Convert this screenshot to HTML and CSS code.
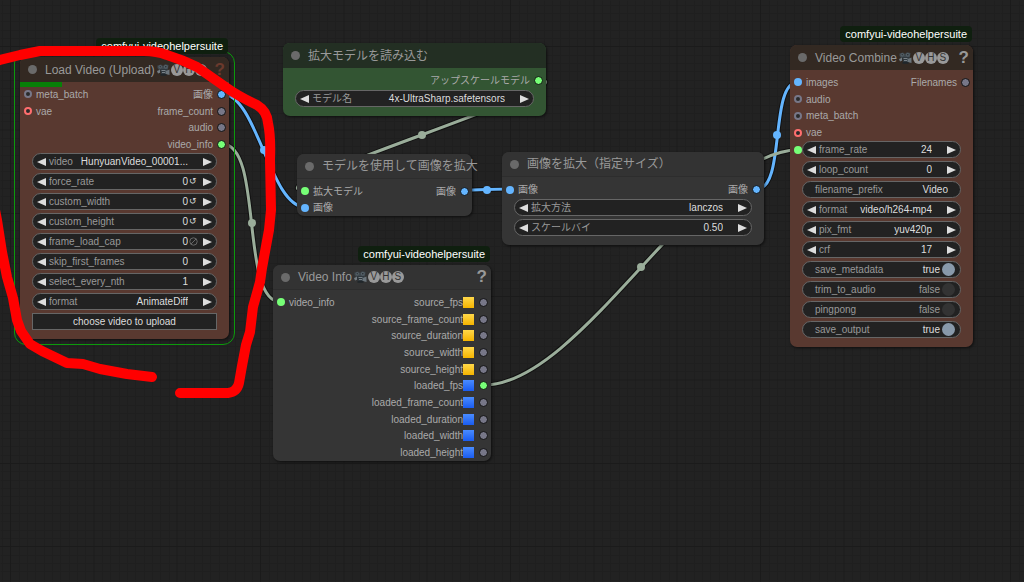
FILE: index.html
```html
<!DOCTYPE html>
<html lang="ja">
<head>
<meta charset="utf-8">
<title>ComfyUI</title>
<link rel="stylesheet" href="styles.css">
</head>
<body>
<svg class="defs" aria-hidden="true">
  <symbol id="left" viewBox="0 0 9 8"><path d="M9 0V8L0 4Z"/></symbol>
  <symbol id="right" viewBox="0 0 9 8"><path d="M0 0V8L9 4Z"/></symbol>
  <symbol id="camera" viewBox="0 0 13 12">
    <path d="M.5 1.500L4 .5L6 2L8 .3L11.500 1L11 5L10 6H2L.5 4z" fill="#3f484e"/>
    <circle cx="3.2" cy="2.8" r="1.6" fill="#5a656c"/><circle cx="8.8" cy="2.8" r="1.9" fill="#566168"/>
    <circle cx="3.2" cy="2.8" r=".7" fill="#23292d"/><circle cx="8.8" cy="2.8" r=".8" fill="#23292d"/>
    <path d="M3 5h7v5H4z" fill="#2f383e"/><path d="M8.500 7l4-1.500v5.500L8.500 10z" fill="#6a747b"/>
    <path d="M0 7L3 5.700v3L1 9.500z" fill="#737d84"/><path d="M4.500 6.500h4M5 8.500h3" stroke="#828a90" stroke-width=".9"/>
    <path d="M3.500 10h6v1.800h-6z" fill="#20262a"/>
  </symbol>
</svg>
<main class="canvas">
  <svg class="layer" aria-hidden="true">
    <defs>
      <pattern id="grid" width="250" height="250" patternUnits="userSpaceOnUse">
        <rect width="250" height="250" fill="#222"/>
        <path class="minor" d="M2 0V250M19 0V250M27 0V250M35 0V250M44 0V250M52 0V250M60 0V250M69 0V250M77 0V250M85 0V250M102 0V250M110 0V250M119 0V250M127 0V250M135 0V250M144 0V250M152 0V250M160 0V250M169 0V250M185 0V250M194 0V250M202 0V250M210 0V250M219 0V250M227 0V250M235 0V250M244 0V250"/>
        <path class="minor" d="M0 5H250M0 13H250M0 21H250M0 30H250M0 38H250M0 55H250M0 63H250M0 71H250M0 80H250M0 88H250M0 96H250M0 105H250M0 113H250M0 121H250M0 138H250M0 146H250M0 155H250M0 163H250M0 171H250M0 180H250M0 188H250M0 196H250M0 205H250M0 221H250M0 230H250M0 238H250M0 246H250"/>
        <path class="major" d="M10.500 0V250M94 0V250M177 0V250M0 46.500H250M0 130H250M0 213.500H250"/>
      </pattern>
    </defs>
    <rect width="100%" height="100%" fill="url(#grid)"/>
    <g class="halo">
      <path d="M222 94C257 94 270 207 305 207"/><path d="M222 144C264 144 239 302 281 302"/>
      <path d="M538 80C602 80 241 190 305 190"/><path d="M464 190C476 190 498 189 510 189"/>
      <path d="M757 189C786 189 769 82 798 82"/><path d="M484 385C582 385 700 150 798 150"/>
    </g>
    <g class="wire blue">
      <path d="M222 94C257 94 270 207 305 207"/><path d="M464 190C476 190 498 189 510 189"/><path d="M757 189C786 189 769 82 798 82"/>
      <circle cx="264" cy="150" r="4"/><circle cx="487" cy="190" r="4"/><circle cx="777" cy="135" r="4"/>
    </g>
    <g class="wire sage">
      <path d="M222 144C264 144 239 302 281 302"/><path d="M538 80C602 80 241 190 305 190"/><path d="M484 385C582 385 700 150 798 150"/>
      <circle cx="252" cy="223" r="4"/><circle cx="422" cy="135" r="4"/><circle cx="641" cy="267" r="4"/>
    </g>
  </svg>

  <section class="node brown load selected">
    <span class="badge">comfyui-videohelpersuite</span>
    <header><i class="knob"></i><h2>Load Video (Upload)</h2><svg class="cam"><use href="#camera"/></svg><span class="vhs"><b>V</b><b>H</b><b>S</b></span><button class="help">?</button></header>
    <div class="progress"></div>
    <div class="slots four">
      <ul class="in"><li><i class="dot ring"></i>meta_batch</li><li><i class="dot ring red"></i>vae</li></ul>
      <ul class="out"><li>画像<i class="dot blue"></i></li><li>frame_count<i class="dot"></i></li><li>audio<i class="dot"></i></li><li>video_info<i class="dot green"></i></li></ul>
    </div>
    <div class="widgets">
      <div class="widget"><button aria-label="previous"><svg><use href="#left"/></svg></button><label for="w1">video</label><select id="w1"><option>HunyuanVideo_00001...</option></select><span class="hint"></span><button aria-label="next"><svg><use href="#right"/></svg></button></div>
      <div class="widget"><button aria-label="decrease"><svg><use href="#left"/></svg></button><label for="w2">force_rate</label><input id="w2" value="0"><span class="hint">↺</span><button aria-label="increase"><svg><use href="#right"/></svg></button></div>
      <div class="widget"><button aria-label="decrease"><svg><use href="#left"/></svg></button><label for="w3">custom_width</label><input id="w3" value="0"><span class="hint">↺</span><button aria-label="increase"><svg><use href="#right"/></svg></button></div>
      <div class="widget"><button aria-label="decrease"><svg><use href="#left"/></svg></button><label for="w4">custom_height</label><input id="w4" value="0"><span class="hint">↺</span><button aria-label="increase"><svg><use href="#right"/></svg></button></div>
      <div class="widget"><button aria-label="decrease"><svg><use href="#left"/></svg></button><label for="w5">frame_load_cap</label><input id="w5" value="0"><span class="hint"><svg viewBox="0 0 9 9"><circle cx="4.500" cy="4.500" r="3.700"/><path d="M2 7L7 2"/></svg></span><button aria-label="increase"><svg><use href="#right"/></svg></button></div>
      <div class="widget"><button aria-label="decrease"><svg><use href="#left"/></svg></button><label for="w6">skip_first_frames</label><input id="w6" value="0"><span class="hint"></span><button aria-label="increase"><svg><use href="#right"/></svg></button></div>
      <div class="widget"><button aria-label="decrease"><svg><use href="#left"/></svg></button><label for="w7">select_every_nth</label><input id="w7" value="1"><span class="hint"></span><button aria-label="increase"><svg><use href="#right"/></svg></button></div>
      <div class="widget"><button aria-label="previous"><svg><use href="#left"/></svg></button><label for="w8">format</label><select id="w8"><option>AnimateDiff</option></select><span class="hint"></span><button aria-label="next"><svg><use href="#right"/></svg></button></div>
      <button class="upload">choose video to upload</button>
    </div>
  </section>

  <section class="node forest model">
    <header><i class="knob"></i><h2>拡大モデルを読み込む</h2></header>
    <div class="slots one"><ul class="in"></ul><ul class="out"><li>アップスケールモデル<i class="dot green"></i></li></ul></div>
    <div class="widgets">
      <div class="widget"><button aria-label="previous"><svg><use href="#left"/></svg></button><label for="w9">モデル名</label><select id="w9"><option>4x-UltraSharp.safetensors</option></select><span class="hint"></span><button aria-label="next"><svg><use href="#right"/></svg></button></div>
    </div>
  </section>

  <section class="node upscale">
    <header><i class="knob"></i><h2>モデルを使用して画像を拡大</h2></header>
    <div class="slots two"><ul class="in"><li><i class="dot linked green"></i>拡大モデル</li><li><i class="dot linked blue"></i>画像</li></ul><ul class="out"><li>画像<i class="dot blue"></i></li></ul></div>
  </section>

  <section class="node scale">
    <header><i class="knob"></i><h2>画像を拡大（指定サイズ）</h2></header>
    <div class="slots one"><ul class="in"><li><i class="dot linked blue"></i>画像</li></ul><ul class="out"><li>画像<i class="dot blue"></i></li></ul></div>
    <div class="widgets">
      <div class="widget"><button aria-label="previous"><svg><use href="#left"/></svg></button><label for="w10">拡大方法</label><select id="w10"><option>lanczos</option></select><span class="hint"></span><button aria-label="next"><svg><use href="#right"/></svg></button></div>
      <div class="widget"><button aria-label="decrease"><svg><use href="#left"/></svg></button><label for="w11">スケールバイ</label><input id="w11" value="0.50"><span class="hint"></span><button aria-label="increase"><svg><use href="#right"/></svg></button></div>
    </div>
  </section>

  <section class="node info">
    <span class="badge">comfyui-videohelpersuite</span>
    <header><i class="knob"></i><h2>Video Info</h2><svg class="cam"><use href="#camera"/></svg><span class="vhs"><b>V</b><b>H</b><b>S</b></span><button class="help">?</button></header>
    <div class="slots ten">
      <ul class="in"><li><i class="dot linked green"></i>video_info</li></ul>
      <ul class="out">
        <li>source_fps<i class="tile"></i><i class="dot"></i></li>
        <li>source_frame_count<i class="tile"></i><i class="dot"></i></li>
        <li>source_duration<i class="tile"></i><i class="dot"></i></li>
        <li>source_width<i class="tile"></i><i class="dot"></i></li>
        <li>source_height<i class="tile"></i><i class="dot"></i></li>
        <li>loaded_fps<i class="tile loaded"></i><i class="dot green"></i></li>
        <li>loaded_frame_count<i class="tile loaded"></i><i class="dot"></i></li>
        <li>loaded_duration<i class="tile loaded"></i><i class="dot"></i></li>
        <li>loaded_width<i class="tile loaded"></i><i class="dot"></i></li>
        <li>loaded_height<i class="tile loaded"></i><i class="dot"></i></li>
      </ul>
    </div>
  </section>

  <section class="node brown combine">
    <span class="badge">comfyui-videohelpersuite</span>
    <header><i class="knob"></i><h2>Video Combine</h2><svg class="cam"><use href="#camera"/></svg><span class="vhs"><b>V</b><b>H</b><b>S</b></span><button class="help">?</button></header>
    <div class="slots four">
      <ul class="in"><li><i class="dot linked blue"></i>images</li><li><i class="dot ring"></i>audio</li><li><i class="dot ring"></i>meta_batch</li><li><i class="dot ring red"></i>vae</li></ul>
      <ul class="out"><li>Filenames<i class="dot"></i></li></ul>
    </div>
    <div class="widgets">
      <div class="widget"><i class="dot linked green port"></i><button aria-label="decrease"><svg><use href="#left"/></svg></button><label for="w12">frame_rate</label><input id="w12" value="24"><span class="hint"></span><button aria-label="increase"><svg><use href="#right"/></svg></button></div>
      <div class="widget"><button aria-label="decrease"><svg><use href="#left"/></svg></button><label for="w13">loop_count</label><input id="w13" value="0"><span class="hint"></span><button aria-label="increase"><svg><use href="#right"/></svg></button></div>
      <div class="widget text"><label for="w14">filename_prefix</label><input id="w14" value="Video"></div>
      <div class="widget"><button aria-label="previous"><svg><use href="#left"/></svg></button><label for="w15">format</label><select id="w15"><option>video/h264-mp4</option></select><span class="hint"></span><button aria-label="next"><svg><use href="#right"/></svg></button></div>
      <div class="widget"><button aria-label="previous"><svg><use href="#left"/></svg></button><label for="w16">pix_fmt</label><select id="w16"><option>yuv420p</option></select><span class="hint"></span><button aria-label="next"><svg><use href="#right"/></svg></button></div>
      <div class="widget"><button aria-label="decrease"><svg><use href="#left"/></svg></button><label for="w17">crf</label><input id="w17" value="17"><span class="hint"></span><button aria-label="increase"><svg><use href="#right"/></svg></button></div>
      <div class="widget toggle"><label for="w18">save_metadata</label><span class="state on">true</span><input type="checkbox" id="w18" checked></div>
      <div class="widget toggle"><label for="w19">trim_to_audio</label><span class="state">false</span><input type="checkbox" id="w19"></div>
      <div class="widget toggle"><label for="w20">pingpong</label><span class="state">false</span><input type="checkbox" id="w20"></div>
      <div class="widget toggle"><label for="w21">save_output</label><span class="state on">true</span><input type="checkbox" id="w21" checked></div>
    </div>
  </section>

  <svg class="layer marker" aria-hidden="true">
    <path d="M-8 62L0 60L20 55L40 51H143Q157 51 167 55Q183 60 197 67L227 88Q238 96 257 105Q267 111 268 123Q271 137 270 160L271 210L269 230L262 268L260 282L253 307L250 332L246 345L242 366L239 383Q237 392 228 393H180"/>
    <path d="M-10 185L-3 220L2 252L7 277L13 298L17 320L21 331L30 344L42 351L67 363L83 364L100 369L127 374L152 377"/>
  </svg>
</main>
</body>
</html>
```
FILE: styles.css
```css
* { box-sizing: border-box; }
body { margin: 0; background: #222; font-family: "Liberation Sans", "Noto Sans CJK JP", sans-serif; font-size: 10px; line-height: 15px; color: #aaa; }
.defs { position: absolute; width: 0; height: 0; }
.canvas { position: relative; width: 100%; min-height: 100vh; overflow: hidden; }
.layer { position: absolute; top: 0; left: 0; width: 100%; height: 100%; }
.minor { stroke: #1f1f1f; stroke-width: 1; transform: translate(.5px, .5px); }
.major { stroke: #1b1b1b; stroke-width: 1; }
.halo path { fill: none; stroke: #111; stroke-width: 5; }
.wire path { fill: none; stroke-width: 3; }
.wire.blue path { stroke: #64b5ff; }
.wire.blue circle { fill: #64b5ff; }
.wire.sage path { stroke: #9aad9a; }
.wire.sage circle { fill: #9aad9a; }
.marker { pointer-events: none; }
.marker path { fill: none; stroke: #f00; stroke-width: 10; stroke-linecap: round; stroke-linejoin: round; }

ul { list-style: none; margin: 0; padding: 0; }
button { border: 0; padding: 0; background: none; color: inherit; font: inherit; }

.node { position: absolute; background: #353535; border-radius: 7px; box-shadow: 1px 1px 3px #0009; padding-bottom: 9px; }
.load { left: 20px; top: 57px; width: 209px; }
.model { left: 283px; top: 43px; width: 263px; }
.upscale { left: 297px; top: 154px; width: 175px; }
.scale { left: 502px; top: 152px; width: 262px; }
.info { left: 273px; top: 265px; width: 218px; }
.combine { left: 790px; top: 45px; width: 183px; }
.upscale, .info { padding-bottom: 0; }
.brown { background: #593930; }
.forest { background: #353; }
.selected::before { content: ""; position: absolute; inset: -6px; border: 1px solid #0c9a0c; border-radius: 12px; pointer-events: none; }

header { display: flex; align-items: center; height: 25px; padding: 0 4px 0 8px; border-radius: 7px 7px 0 0; background: #333; color: #999; border-bottom: 1px solid #2d2d2d; white-space: nowrap; }
.brown header { background: #332922; border: 0; }
.forest header { background: #232f23; border: 0; }
.knob { flex: none; width: 9px; height: 9px; border-radius: 50%; background: #6a6a6a; margin-right: 8px; }
h2 { margin: 0; font-size: 12px; line-height: 18px; font-weight: 400; }
.cam { flex: none; width: 13px; height: 12px; margin: 0 1px 0 2px; }
.vhs { display: flex; }
.vhs b { width: 12px; height: 12px; border-radius: 50%; background: #999; color: #333; font-size: 10px; line-height: 12px; font-weight: 400; text-align: center; }
.help { margin-left: auto; font-size: 17px; font-weight: 700; line-height: 24px; }
.load .help { color: #6b3a2d; }
.badge { position: absolute; right: 1px; top: -19px; height: 16px; padding: 0 5px; border-radius: 4px; background: #0f1f0f; color: #fff; font-size: 11px; line-height: 16px; }
.progress { position: absolute; left: 0; top: 25px; width: 20%; height: 5px; background: #088008; }

.slots { display: flex; justify-content: space-between; padding: 4px 3px 0 4px; }
.slots ul { display: grid; }
.one ul { height: 17px; grid-template-rows: 1fr; }
.two ul { height: 33px; grid-template-rows: repeat(2, 1fr); }
.four ul { height: 67px; grid-template-rows: repeat(4, 1fr); }
.ten ul { height: 167px; grid-template-rows: repeat(10, 1fr); }
.slots li { display: flex; align-items: center; gap: 4px; white-space: nowrap; }
.out li { justify-content: flex-end; }
.dot { flex: none; width: 9px; height: 9px; border: 1px solid #111; border-radius: 50%; background: #778; }
.dot.blue { background: #64b5ff; }
.dot.green { background: #7f7; }
.dot.linked { border: 0; width: 8px; height: 8px; }
.dot.ring { width: 8px; height: 8px; border: 2px solid #778; background: #2a2a2a; }
.dot.red { border-color: #ff6e6e; }
.tile { width: 11px; height: 11px; margin: 0 1px 0 -4px; background: linear-gradient(#ffd84a, #f5b400); }
.tile.loaded { background: linear-gradient(#4a8cff, #1a5cf0); }

.widgets { display: grid; grid-template-columns: minmax(0, 1fr); gap: 3px; padding: 0 12px; }
.one + .widgets { padding-top: 1px; }
.widget { position: relative; display: flex; align-items: center; height: 17px; padding: 0 4px; border: 1px solid #666; border-radius: 9px; background: #222; color: #999; white-space: nowrap; }
.widget button { display: flex; flex: none; }
.widget button svg { width: 9px; height: 8px; fill: #ddd; }
.widget label { margin-left: 3px; }
.widget input, .widget select { appearance: none; flex: 1; width: 0; min-width: 0; height: 15px; margin: 0; padding: 0; border: 0; outline: 0; background: none; color: #ddd; font: inherit; text-align: right; text-align-last: right; }
.hint { flex: none; width: 15px; padding-left: 1px; color: #ddd; font-size: 9px; line-height: 15px; }
.hint svg { display: block; width: 9px; height: 9px; fill: none; stroke: #666; }
.widget.text { padding: 0 12px; }
.text label, .toggle label { margin-left: 0; }
.widget.toggle { padding: 0 5px 0 12px; }
.state { margin-left: auto; margin-right: 2px; }
.state.on { color: #ddd; }
.widget input[type="checkbox"] { flex: none; width: 13px; height: 13px; border-radius: 50%; background: #333; }
.widget input[type="checkbox"]:checked { background: #89a; }
.port { position: absolute; left: -9px; top: 4px; }
.upload { height: 17px; border: 1px solid #666; background: #222; color: #ddd; line-height: 15px; text-align: center; }
```
